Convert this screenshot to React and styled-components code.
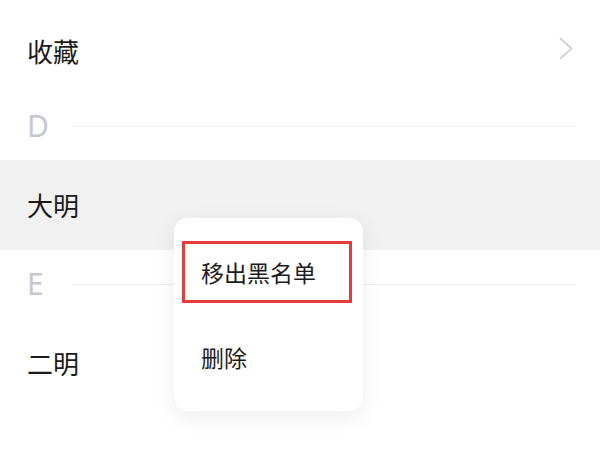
import styled, { createGlobalStyle } from "styled-components";

const GlobalStyle = createGlobalStyle`
  html, body {
    margin: 0;
    padding: 0;
    background: #ffffff;
  }
  body {
    font-family: "Noto Sans CJK SC", "Noto Sans", sans-serif;
  }
`;

const Page = styled.div`
  position: relative;
  width: 600px;
  height: 450px;
  overflow: hidden;
  padding-top: 10px;
  box-sizing: border-box;
  background: #ffffff;
`;

const Row = styled.div`
  height: ${(props) => props.height || 90}px;
  display: flex;
  align-items: center;
  justify-content: space-between;
  padding: 0 27px;
  background-color: ${(props) => (props.active ? "#f1f1f1" : "transparent")};
  color: #1a1a1a;
  font-size: 26px;
  line-height: 1;
`;

const Chevron = styled.svg`
  width: 14px;
  height: 23px;
  margin-top: -6px;
`;

const Header = styled.div`
  height: 68px;
  display: flex;
  align-items: center;
  padding: 0 25px 0 27px;
`;

const Letter = styled.span`
  width: 45px;
  font-family: "Noto Sans", sans-serif;
  font-size: 30px;
  color: #c6c7d1;
  line-height: 1;
`;

const Line = styled.div`
  flex: 1;
  height: 1px;
  background-color: #efefef;
`;

const Popup = styled.div`
  position: absolute;
  left: 174px;
  top: 218px;
  width: 189px;
  box-sizing: border-box;
  padding: 23px 11px 23px 8px;
  display: flex;
  flex-direction: column;
  gap: 23px;
  background: #ffffff;
  border-radius: 14px;
  box-shadow: 0 6px 22px rgba(0, 0, 0, 0.08);
`;

const MenuItem = styled.div`
  height: 62px;
  box-sizing: border-box;
  display: flex;
  align-items: center;
  padding-left: 16px;
  border: 3px solid ${(props) => (props.marked ? "#e63b3b" : "transparent")};
  font-size: 23px;
  color: #1c1c1c;
  line-height: 1;
`;

export default function App() {
  return (
    <>
      <GlobalStyle />
      <Page>
        <Row height={82}>
          <span>收藏</span>
          <Chevron viewBox="0 0 14 23" fill="none">
            <polyline
              points="1.5,1.5 12.5,11.5 1.5,21.5"
              stroke="#c6c6c6"
              strokeWidth="1.6"
              strokeLinecap="round"
              strokeLinejoin="round"
            />
          </Chevron>
        </Row>
        <Header>
          <Letter>D</Letter>
          <Line />
        </Header>
        <Row active>
          <span>大明</span>
        </Row>
        <Header>
          <Letter>E</Letter>
          <Line />
        </Header>
        <Row>
          <span>二明</span>
        </Row>
        <Popup>
          <MenuItem marked>移出黑名单</MenuItem>
          <MenuItem>删除</MenuItem>
        </Popup>
      </Page>
    </>
  );
}
